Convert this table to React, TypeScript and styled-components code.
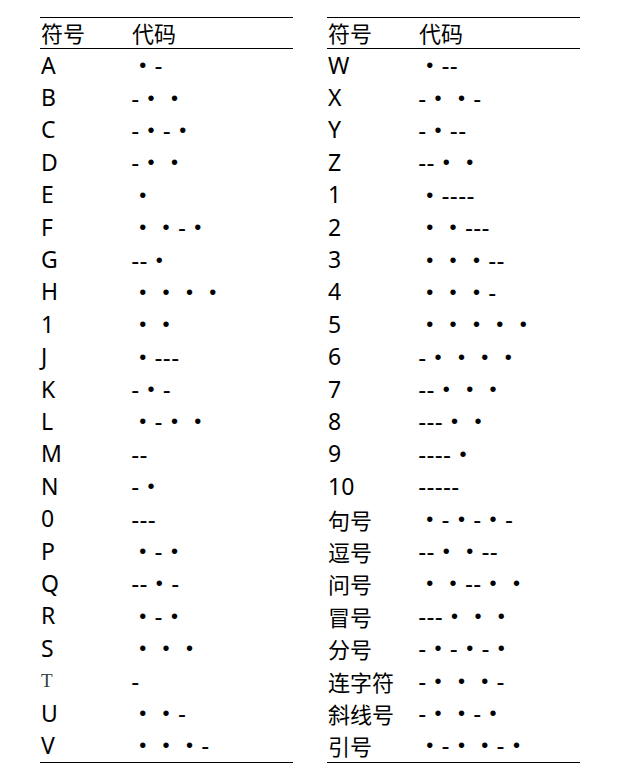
import React from 'react';
import styled, { createGlobalStyle } from 'styled-components';

const GlobalStyle = createGlobalStyle`
  html, body {
    margin: 0;
    padding: 0;
    background: #fff;
  }
  body {
    font-family: "Noto Sans", "Noto Sans CJK SC", sans-serif;
    color: #000;
  }
`;

const Page = styled.div`
  display: flex;
  gap: 34px;
  padding: 17px 0 0 40px;
`;

const Table = styled.div`
  width: 253px;
  border-top: 1px solid #000;
  border-bottom: 1px solid #000;
`;

const HeadRow = styled.div`
  display: flex;
  align-items: center;
  height: 31px;
  padding-bottom: 2px;
  box-sizing: border-box;
  border-bottom: 1px solid #000;
  font-family: "Noto Sans CJK SC", sans-serif;
  font-size: 22px;
`;

const Row = styled.div`
  display: flex;
  align-items: center;
  height: 32.4px;
`;

const SymbolCell = styled.div<{ $cjk?: boolean; $serif?: boolean }>`
  width: 91px;
  padding-left: 1px;
  box-sizing: border-box;
  line-height: 1;
  font-family: ${(p) =>
    p.$serif
      ? '"Liberation Serif", serif'
      : p.$cjk
      ? '"Noto Sans CJK SC", sans-serif'
      : '"Noto Sans", "Noto Sans CJK SC", sans-serif'};
  font-size: ${(p) => (p.$serif ? '19px' : p.$cjk ? '22px' : '23px')};
  color: ${(p) => (p.$serif ? '#333d3d' : '#000')};
`;

const HeadCell = styled.div`
  width: 91px;
  padding-left: 1px;
  box-sizing: border-box;
  line-height: 1;
`;

const Code = styled.div`
  display: flex;
  align-items: center;
  height: 100%;
`;

const Dot = styled.span`
  display: inline-block;
  width: 23.4px;
  text-align: center;
  font-family: "Liberation Sans", sans-serif;
  font-size: 20px;
  line-height: 1;
`;

const Dash = styled.span`
  display: inline-block;
  width: 8.3px;
  text-align: center;
  font-family: "Liberation Sans", sans-serif;
  font-size: 24px;
  line-height: 1;
  position: relative;
  top: 1px;
`;

type Entry = { sym: string; code: string; cjk?: boolean; serif?: boolean };

const left: Entry[] = [
  { sym: 'A', code: '.-' },
  { sym: 'B', code: '-..' },
  { sym: 'C', code: '-.-.' },
  { sym: 'D', code: '-..' },
  { sym: 'E', code: '.' },
  { sym: 'F', code: '..-.' },
  { sym: 'G', code: '--.' },
  { sym: 'H', code: '....' },
  { sym: '1', code: '..' },
  { sym: 'J', code: '.---' },
  { sym: 'K', code: '-.-' },
  { sym: 'L', code: '.-..' },
  { sym: 'M', code: '--' },
  { sym: 'N', code: '-.' },
  { sym: '0', code: '---' },
  { sym: 'P', code: '.-.' },
  { sym: 'Q', code: '--.-' },
  { sym: 'R', code: '.-.' },
  { sym: 'S', code: '...' },
  { sym: 'T', code: '-', serif: true },
  { sym: 'U', code: '..-' },
  { sym: 'V', code: '...-' },
];

const right: Entry[] = [
  { sym: 'W', code: '.--' },
  { sym: 'X', code: '-..-' },
  { sym: 'Y', code: '-.--' },
  { sym: 'Z', code: '--..' },
  { sym: '1', code: '.----' },
  { sym: '2', code: '..---' },
  { sym: '3', code: '...--' },
  { sym: '4', code: '...-' },
  { sym: '5', code: '.....' },
  { sym: '6', code: '-....' },
  { sym: '7', code: '--...' },
  { sym: '8', code: '---..' },
  { sym: '9', code: '----.' },
  { sym: '10', code: '-----' },
  { sym: '句号', code: '.-.-.-', cjk: true },
  { sym: '逗号', code: '--..--', cjk: true },
  { sym: '问号', code: '..--..', cjk: true },
  { sym: '冒号', code: '---...', cjk: true },
  { sym: '分号', code: '-.-.-.', cjk: true },
  { sym: '连字符', code: '-...-', cjk: true },
  { sym: '斜线号', code: '-..-.', cjk: true },
  { sym: '引号', code: '.-..-.', cjk: true },
];

const MorseCode = ({ code }: { code: string }) => (
  <Code>
    {code.split('').map((c, i) =>
      c === '.' ? <Dot key={i}>•</Dot> : <Dash key={i}>-</Dash>
    )}
  </Code>
);

const MorseTable = ({ rows }: { rows: Entry[] }) => (
  <Table>
    <HeadRow>
      <HeadCell>符号</HeadCell>
      <HeadCell>代码</HeadCell>
    </HeadRow>
    {rows.map((r, i) => (
      <Row key={i}>
        <SymbolCell $cjk={r.cjk} $serif={r.serif}>
          {r.sym}
        </SymbolCell>
        <MorseCode code={r.code} />
      </Row>
    ))}
  </Table>
);

const App: React.FC = () => (
  <>
    <GlobalStyle />
    <Page>
      <MorseTable rows={left} />
      <MorseTable rows={right} />
    </Page>
  </>
);

export default App;
